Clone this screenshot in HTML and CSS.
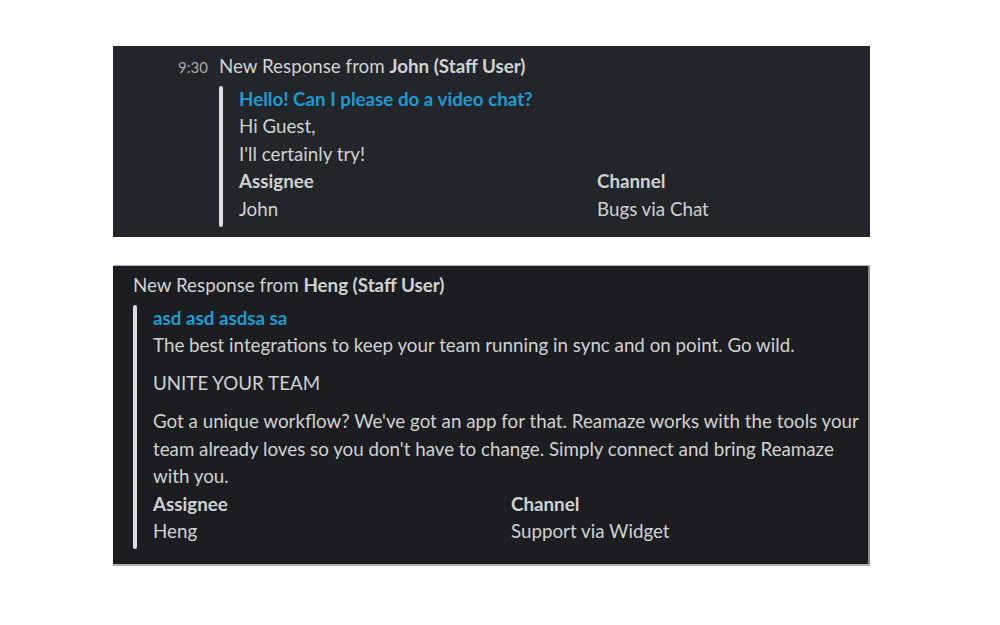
FILE: index.html
```html
<!DOCTYPE html>
<html>
<head>
<meta charset="utf-8">
<link rel="stylesheet" href="styles.css">
</head>
<body>
<div class="page">
  <div class="panel panel-a">
    <div class="head">
      <span class="time">9:30</span>
      <span class="title">New Response from <b>John (Staff User)</b></span>
    </div>
    <div class="attach attach-a">
      <div class="bar"></div>
      <div class="body">
        <div class="link">Hello! Can I please do a video chat?</div>
        <div class="text">Hi Guest,<br>I'll certainly try!</div>
        <div class="fields">
          <div class="field"><div class="label">Assignee</div><div>John</div></div>
          <div class="field"><div class="label">Channel</div><div>Bugs via Chat</div></div>
        </div>
      </div>
    </div>
  </div>

  <div class="panel panel-b">
    <div class="head head-b">
      <span class="title">New Response from <b>Heng (Staff User)</b></span>
    </div>
    <div class="attach attach-b">
      <div class="bar"></div>
      <div class="body">
        <div class="link">asd asd asdsa sa</div>
        <p class="para">The best integrations to keep your team running in sync and on point. Go wild.</p>
        <p class="para">UNITE YOUR TEAM</p>
        <p class="para last">Got a unique workflow? We've got an app for that. Reamaze works with the tools your team already loves so you don't have to change. Simply connect and bring Reamaze with you.</p>
        <div class="fields">
          <div class="field"><div class="label">Assignee</div><div>Heng</div></div>
          <div class="field"><div class="label">Channel</div><div>Support via Widget</div></div>
        </div>
      </div>
    </div>
  </div>
</div>
</body>
</html>
```

FILE: styles.css
```css
html, body {
  margin: 0;
  padding: 0;
  background: #ffffff;
}
body {
  font-family: Lato, "Noto Sans", sans-serif;
  font-size: 18.75px;
  line-height: 27.5px;
  color: #d1d2d3;
  overflow: hidden;
}
.page {
  padding: 46px 0 0 113px;
  display: flex;
  flex-direction: column;
  gap: 28px;
}
.panel {
  position: relative;
  width: 757px;
  overflow: hidden;
}
.panel-a {
  background: #222529;
  height: 191px;
  box-sizing: border-box;
  padding: 5px 0 0 65px;
  border-top: 1px solid #222529;
}
.panel-a::before {
  content: "";
  position: absolute;
  left: 27px;
  right: 3px;
  top: -1px;
  height: 1px;
  background: #3b3e42;
}
.panel-b {
  background: #1c1d21;
  height: 301px;
  box-sizing: border-box;
  padding: 5px 0 0 20px;
  border-top: 1px solid #b8b8b8;
  border-right: 2px solid #8c8c8c;
  border-bottom: 2px solid #b0b0b0;
}
.head {
  display: flex;
  align-items: baseline;
  gap: 9px;
  white-space: nowrap;
}
.time {
  font-size: 15px;
  color: #ababad;
  width: 32px;
}
.title b {
  font-weight: 700;
}
.attach {
  display: flex;
  margin-top: 3px;
}
.attach-a {
  margin-left: 41px;
}
.attach-b {
  margin-top: 5px;
}
.bar {
  flex: 0 0 4px;
  width: 4px;
  background: #dddddd;
  border-radius: 2px;
  margin-right: 16px;
  margin-top: 1px;
}
.body {
  width: 716px;
  flex: 0 0 716px;
  padding-bottom: 5px;
}
.attach-b .body {
  padding-bottom: 4px;
}
.link {
  color: #1d9bd1;
  font-weight: 700;
}
.para {
  margin: 0 0 10.5px 0;
}
.para.last {
  margin-bottom: 0;
}
.fields {
  display: grid;
  grid-template-columns: 358px 358px;
}
.label {
  font-weight: 700;
}
```
